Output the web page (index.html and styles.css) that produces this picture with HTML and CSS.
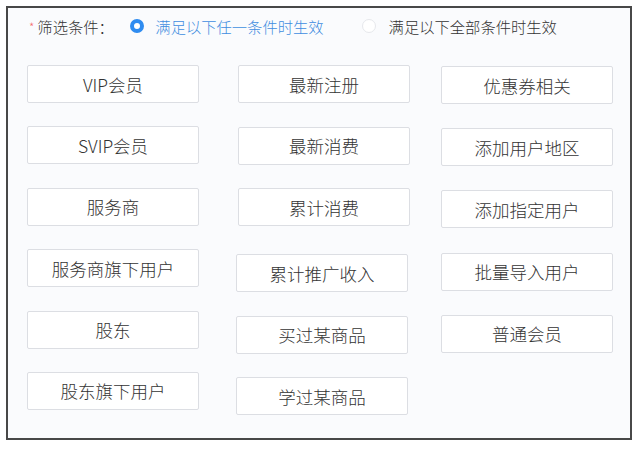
FILE: index.html
```html
<!DOCTYPE html>
<html lang="zh-CN">
<head>
    <meta charset="UTF-8">
    <meta name="viewport" content="width=device-width, initial-scale=1.0">
    <title>筛选条件</title>
    <link rel="stylesheet" href="styles.css">
</head>
<body>

    <div class="panel">
        <div class="filter-row">
            <span class="required">*</span>
            <span class="filter-label">筛选条件：</span>
            <label class="radio checked">
                <span class="radio-dot"></span>
                <span class="radio-text">满足以下任一条件时生效</span>
            </label>
            <label class="radio">
                <span class="radio-dot"></span>
                <span class="radio-text">满足以下全部条件时生效</span>
            </label>
        </div>

        <div class="options">
            <div class="col col-1">
                <button class="opt">VIP会员</button>
                <button class="opt">SVIP会员</button>
                <button class="opt">服务商</button>
                <button class="opt">服务商旗下用户</button>
                <button class="opt">股东</button>
                <button class="opt">股东旗下用户</button>
            </div>
            <div class="col col-2">
                <button class="opt">最新注册</button>
                <button class="opt">最新消费</button>
                <button class="opt">累计消费</button>
                <button class="opt shift">累计推广收入</button>
                <button class="opt shift">买过某商品</button>
                <button class="opt shift">学过某商品</button>
            </div>
            <div class="col col-3">
                <button class="opt">优惠券相关</button>
                <button class="opt">添加用户地区</button>
                <button class="opt">添加指定用户</button>
                <button class="opt">批量导入用户</button>
                <button class="opt">普通会员</button>
            </div>
        </div>
    </div>

</body>
</html>
```

FILE: styles.css
```css
body {
    margin: 0;
    background-color: #fff;
    font-family: "Noto Sans CJK SC", "Noto Sans", sans-serif;
    font-weight: 300;
    color: #333;
}
.panel {
    box-sizing: border-box;
    margin: 6px;
    width: 626px;
    height: 434px;
    border: 2px solid #484848;
    background-color: #fafbfd;
    padding: 7px 0 0 19px;
}
.filter-row {
    display: flex;
    align-items: center;
    height: 22px;
    font-size: 15.3px;
}
.required {
    color: #f56c6c;
    font-size: 12px;
    margin: 0 3px 0 2px;
}
.filter-label {
    width: 93px;
}
.radio {
    display: flex;
    align-items: center;
    margin-right: 38px;
}
.radio-dot {
    box-sizing: border-box;
    width: 14px;
    height: 14px;
    border: 1px solid #e6e8ec;
    border-radius: 50%;
    background-color: #fff;
    margin-right: 11px;
}
.radio.checked .radio-dot {
    border: 4.5px solid #2f8cf0;
}
.radio.checked .radio-text {
    color: #3f8de0;
}
.radio:last-child .radio-dot {
    margin-right: 13px;
}
.options {
    display: flex;
    margin-top: 28px;
}
.col {
    display: flex;
    flex-direction: column;
    width: 172px;
}
.col-1 {
    gap: 23.4px;
}
.col-2 {
    gap: 23.5px;
    margin-left: 39px;
}
.col-3 {
    gap: 24.2px;
    margin-left: 31px;
    padding-top: 1px;
}
.opt {
    box-sizing: border-box;
    width: 172px;
    height: 38px;
    border: 1px solid #dcdee3;
    border-radius: 2px;
    background-color: #fff;
    color: #333;
    font-family: inherit;
    font-weight: 300;
    font-size: 17.5px;
    padding: 0;
    cursor: pointer;
}
.col-2 .shift {
    margin-left: -2px;
}
.col-2 .opt:nth-child(4) {
    margin-top: 4.5px;
}
```
